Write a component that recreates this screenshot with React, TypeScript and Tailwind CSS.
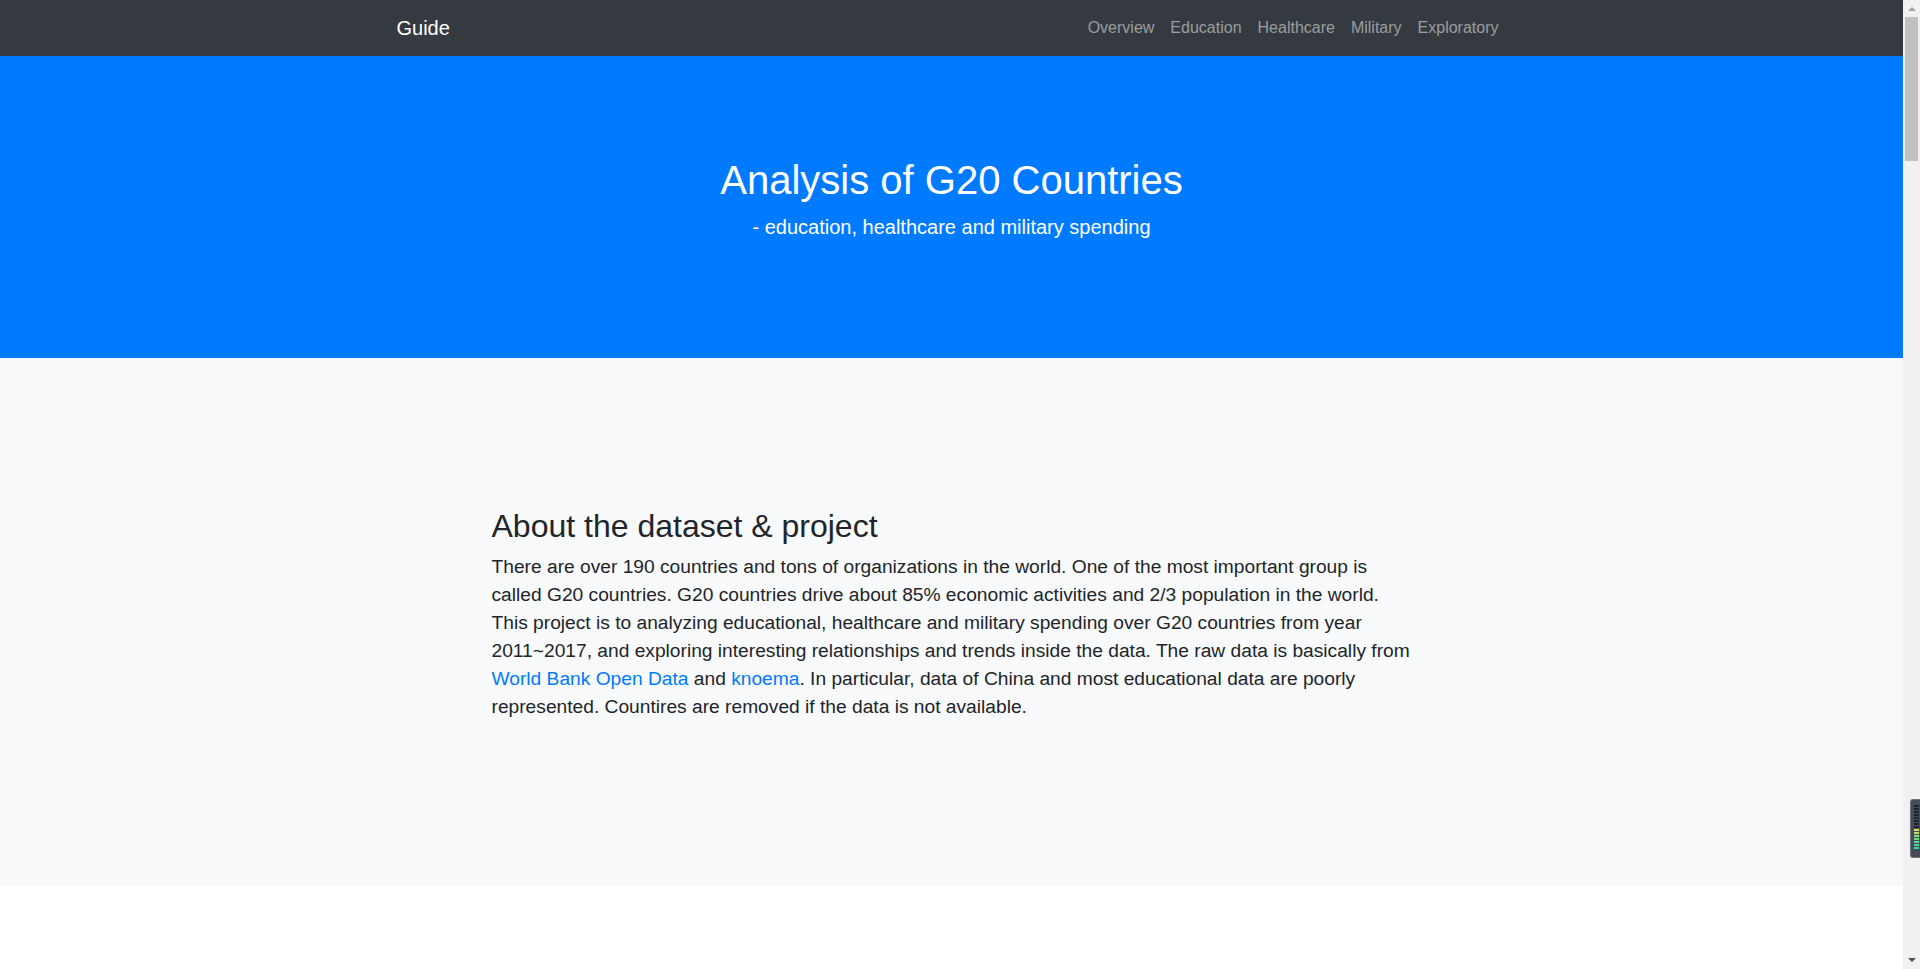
const navLinks = ["Overview", "Education", "Healthcare", "Military", "Exploratory"];

// 右端の小さなメーター (拡張機能のウィジェット)
const meterBars = [
  "bg-[#1f232a]",
  "bg-[#1f232a]",
  "bg-[#1f232a]",
  "bg-[#1f232a]",
  "bg-[#1f232a]",
  "bg-[#1f232a]",
  "bg-[#1f232a]",
  "bg-[#1f232a]",
  "bg-[#d7e35a]",
  "bg-[#b9e36a]",
  "bg-[#8fe07a]",
  "bg-[#6fdc8c]",
  "bg-[#5cd89a]",
  "bg-[#4fd4a6]",
  "bg-[#48d0ae]",
];

const App = () => {
  return (
    <div className="relative flex h-screen overflow-hidden font-['Liberation_Sans',Arial,sans-serif] text-[#212529]">
      <div className="flex-1 overflow-hidden">
        {/* ナビゲーション */}
        <nav className="bg-[#343a40] h-[56px]">
          <div className="w-[1140px] mx-auto px-[15px] h-full flex items-center">
            <a href="#" className="text-white text-[20px] leading-[30px] py-[5px]">
              Guide
            </a>
            <ul className="flex ml-auto">
              {navLinks.map((link) => (
                <li key={link}>
                  <a
                    href="#"
                    className="block px-2 py-2 text-[16px] leading-[24px] text-white/50 hover:text-white/75"
                  >
                    {link}
                  </a>
                </li>
              ))}
            </ul>
          </div>
        </nav>

        {/* ヘッダー */}
        <header className="bg-[#007bff] h-[302px] pt-[100px] text-center text-white">
          <h1 className="text-[40px] leading-[48px] mb-[8px]">
            Analysis of G20 Countries
          </h1>
          <p className="text-[20px] leading-[30px]">
            - education, healthcare and military spending
          </p>
        </header>

        {/* 概要 */}
        <section className="bg-[#f8f9fa] h-[528px] pt-[149px]">
          <div className="w-[1140px] mx-auto px-[110px]">
            <h2 className="text-[32px] leading-[38.4px] mb-2">
              About the dataset &amp; project
            </h2>
            <p className="text-[19.2px] leading-[28px]">
              There are over 190 countries and tons of organizations in the
              world. One of the most important group is called G20 countries.
              G20 countries drive about 85% economic activities and 2/3
              population in the world. This project is to analyzing
              educational, healthcare and military spending over G20 countries
              from year 2011~2017, and exploring interesting relationships and
              trends inside the data. The raw data is basically from{" "}
              <a href="#" className="text-[#007bff] hover:underline">
                World Bank Open Data
              </a>{" "}
              and{" "}
              <a href="#" className="text-[#007bff] hover:underline">
                knoema
              </a>
              . In particular, data of China and most educational data are
              poorly represented. Countires are removed if the data is not
              available.
            </p>
          </div>
        </section>

        <section className="bg-white h-[600px]"></section>
      </div>

      {/* スクロールバー */}
      <aside className="w-[17px] bg-[#f1f1f1] flex flex-col items-center">
        <div className="mt-[7px] w-0 h-0 border-l-[4px] border-r-[4px] border-b-[4px] border-l-transparent border-r-transparent border-b-[#a3a3a3]"></div>
        <div className="mt-[6px] w-[13px] h-[144px] bg-[#c1c1c1]"></div>
        <div className="flex-1"></div>
        <div className="mb-[7px] w-0 h-0 border-l-[4px] border-r-[4px] border-t-[4px] border-l-transparent border-r-transparent border-t-[#505050]"></div>
      </aside>

      {/* ウィジェット */}
      <div className="absolute right-0 top-[799px] w-[10px] h-[59px] rounded-l-[3px] bg-[#464b56] border border-r-0 border-[#6d727c] flex flex-col gap-[1px] pl-[3px] pr-[1px] py-[5px]">
        {meterBars.map((c, i) => (
          <div key={i} className={`h-[2px] ${c}`}></div>
        ))}
      </div>
    </div>
  );
};

export default App;
